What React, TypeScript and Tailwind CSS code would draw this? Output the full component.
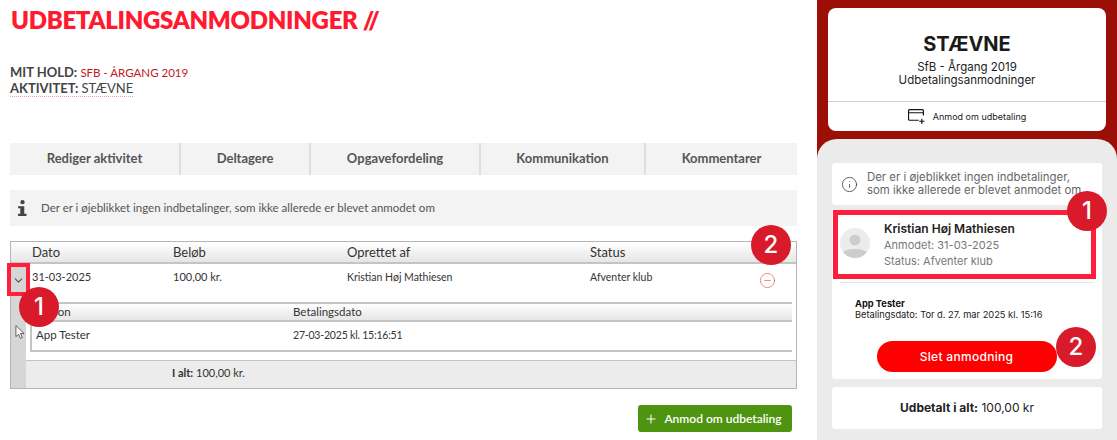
import React from "react";
import { Plus, Info, CircleMinus, ChevronDown } from "lucide-react";

const Badge = ({ n, cls }: { n: string; cls: string }) => (
  <div className={`absolute z-20 flex h-10 w-10 items-center justify-center rounded-full bg-[#d91a2a] text-[24px] font-medium leading-none text-white font-['Inter',sans-serif] ${cls}`}>
    {n}
  </div>
);

const Tab = ({ label, w }: { label: string; w: string }) => (
  <div className={`flex h-full items-center justify-center border-r-2 border-[#dedede] last:border-r-0 ${w}`}>{label}</div>
);

export default function App() {
  return (
    <div className="relative flex h-[440px] w-[1117px] overflow-hidden bg-white font-['Lato',sans-serif]">
      <main className="w-[817px] shrink-0 pl-[10px] pr-[20px] text-[#444]">
        <h1 className="ml-px pt-[4px] text-[24px] font-extrabold leading-[32px] tracking-[-0.3px] text-[#ff1a30]">UDBETALINGSANMODNINGER //</h1>
        <div className="mt-[29px] text-[13px] leading-[15px]">
          <div className="font-bold">MIT HOLD: <span className="text-[11.5px] font-normal text-[#c4161c]">SFB - ÅRGANG 2019</span></div>
          <div className="w-fit border-b border-dotted border-[#f0a0ae] font-bold leading-[16px]">AKTIVITET: <span className="font-normal">STÆVNE</span></div>
        </div>

        <nav className="mt-[46px] flex h-[32px] bg-[#f3f3f3] text-[13px] font-bold text-[#555]">
          <Tab label="Rediger aktivitet" w="w-[171px]" />
          <Tab label="Deltagere" w="w-[130px]" />
          <Tab label="Opgavefordeling" w="w-[170px]" />
          <Tab label="Kommunikation" w="w-[165px]" />
          <Tab label="Kommentarer" w="flex-1" />
        </nav>

        <div className="mt-[15px] flex h-[36px] items-center bg-[#f3f3f3] text-[11.5px] text-[#555]">
          <svg viewBox="0 0 10 18" className="ml-[8px] mr-[14px] h-[16px] w-[9px] fill-[#444]">
            <circle cx="5" cy="2.5" r="2.4" />
            <path d="M0 7h7v8.5h2.5V18H0v-2.5h2.5V9.4H0z" />
          </svg>
          Der er i øjeblikket ingen indbetalinger, som ikke allerede er blevet anmodet om
        </div>

        <section className="mt-[15px] h-[148px] border border-[#b5b5b5] text-[11.5px] text-[#333]">
          <div className="grid h-[22px] grid-cols-[141px_174px_243px_1fr] border-b-2 border-[#c4c4c4] bg-gradient-to-b from-white to-[#e6e6e6] pl-[21px] text-[13px] leading-[20px]">
            <span>Dato</span><span>Beløb</span><span>Oprettet af</span><span>Status</span>
          </div>
          <div className="flex h-[124px]">
            <div className="flex w-[15px] shrink-0 justify-center bg-[#d6d6d6] pt-[10px]">
              <ChevronDown size={13} strokeWidth={2} className="text-[#555]" />
            </div>
            <div className="flex min-w-0 flex-1 flex-col">
              <div className="flex h-[38px] items-start pt-[6px]">
                <div className="grid flex-1 grid-cols-[141px_174px_243px_1fr] pl-[6px] leading-[14px]">
                  <span className="text-[11px]">31-03-2025</span><span className="text-[11px]">100,00 kr.</span><span className="text-[10.5px]">Kristian Høj Mathiesen</span><span className="text-[10.5px]">Afventer klub</span>
                </div>
                <CircleMinus size={17} strokeWidth={1} className="mr-[20px] mt-[2px] text-[#e25b5b]" />
              </div>
              <div className="ml-[4px] mr-[4px] h-[50px] border-b-2 border-l-2 border-[#c4c4c4]">
                <div className="grid h-[20px] grid-cols-[257px_1fr] border-b-2 border-t-2 border-[#c4c4c4] bg-gradient-to-b from-white to-[#e6e6e6] pl-[4px] leading-[16px]">
                  <span>Person</span><span>Betalingsdato</span>
                </div>
                <div className="grid grid-cols-[257px_1fr] pl-[4px] pt-[6px] text-[11.5px] leading-[14px]">
                  <span>App Tester</span><span className="text-[10.5px] tracking-[-0.2px]">27-03-2025 kl. 15:16:51</span>
                </div>
              </div>
              <div className="mt-[8px] flex flex-1 items-center border-t border-[#c4c4c4] bg-[#ececec] pb-[3px] pl-[146px] text-[11px]">
                <span><b>I alt:</b> 100,00 kr.</span>
              </div>
            </div>
          </div>
        </section>

        <div className="mt-[16px] flex justify-end pr-[5px]">
          <button className="flex h-[27px] w-[154px] items-center justify-center gap-[6px] rounded-[3px] bg-[#4f9410] pr-[4px] text-[12px] font-semibold text-white">
            <Plus size={14} strokeWidth={1.8} />
            Anmod om udbetaling
          </button>
        </div>
      </main>

      <aside className="w-[300px] shrink-0 bg-[#9c0f06] font-['Inter',sans-serif] text-[#222]">
        <div className="mx-[11px] mt-[8px] h-[123px] rounded-[8px] bg-white">
          <div className="h-[93px] pt-[24px] text-center">
            <div className="text-[20px] font-bold leading-[24px] text-[#1a1a1a]">STÆVNE</div>
            <div className="mt-[5px] text-[11.5px] leading-[13px]">SfB - Årgang 2019</div>
            <div className="text-[11.5px] leading-[13px]">Udbetalingsanmodninger</div>
          </div>
          <div className="flex h-[30px] items-center justify-center gap-[8px] border-t border-[#cfcfcf] text-[9px]">
            <svg viewBox="0 0 16 14" className="h-[15px] w-[17px] fill-none stroke-[#111]" strokeWidth="1.1">
              <path d="M10 10.5H1.5a1 1 0 0 1-1-1V1.5a1 1 0 0 1 1-1h12a1 1 0 0 1 1 1V6M.5 3.5h14M13 9v5M10.5 11.5h5" />
            </svg>
            Anmod om udbetaling
          </div>
        </div>

        <div className="mt-[8px] h-[301px] rounded-t-[20px] bg-[#ebebeb] px-[15px] pt-[24px]">
          <div className="flex h-[42px] items-center gap-[9px] rounded-[3px] bg-white px-[9px] text-[11.4px] leading-[13px] text-[#666]">
            <Info size={17} strokeWidth={1} className="shrink-0 text-[#222]" />
            <span className="whitespace-nowrap">Der er i øjeblikket ingen indbetalinger,<br />som ikke allerede er blevet anmodet om</span>
          </div>
          <div className="mt-[5px] h-[169px] rounded-b-[3px] bg-white">
            <div className="relative z-10 ml-px flex h-[69px] w-[263px] items-center border-[5px] border-[#ff1f3d] bg-white pl-[2px]">
              <div className="mb-[4px] flex h-[30px] w-[30px] shrink-0 items-center justify-center rounded-full bg-[#ececec]">
                <svg viewBox="0 0 30 30" className="h-[30px] w-[30px] overflow-hidden rounded-full">
                  <circle cx="15" cy="12" r="5.5" fill="#cdcdcd" />
                  <ellipse cx="15" cy="26" rx="13" ry="5" fill="#cdcdcd" />
                </svg>
              </div>
              <div className="ml-[14px] text-[11px] leading-[16px] text-[#777]">
                <div className="text-[12px] font-semibold text-[#222]">Kristian Høj Mathiesen</div>
                <div>Anmodet: 31-03-2025</div>
                <div>Status: Afventer klub</div>
              </div>
            </div>
            <div className="mx-[8px] mt-[3px] border-t border-[#e3e5ea] pl-[15px] pt-[15px] text-[9.3px] leading-[11px]">
              <div className="font-bold text-[#111]">App Tester</div>
              <div>Betalingsdato: Tor d. 27. mar 2025 kl. 15:16</div>
            </div>
            <div className="mt-[21px] flex justify-center pr-[1px]">
              <button className="h-[31px] w-[180px] rounded-full bg-[#ff0000] text-[12px] font-medium tracking-[0.3px] text-white">Slet anmodning</button>
            </div>
          </div>
          <div className="mt-[8px] flex h-[42px] items-center justify-center rounded-[3px] bg-white text-[12px] text-[#222]">
            <span><b className="font-bold">Udbetalt i alt:</b> 100,00 kr</span>
          </div>
        </div>
      </aside>

      <div className="absolute left-[7px] top-[263px] z-10 h-[33px] w-[23px] border-[4px] border-[#ff1f3d]" />
      <svg viewBox="0 0 12 16" className="absolute left-[15px] top-[324px] z-10 h-[16px] w-[11px] fill-white stroke-[#555]" strokeWidth="1">
        <path d="M1 1v12l3-2.5 2 4.5 2-1-2-4.3h4z" />
      </svg>
      <Badge n="1" cls="left-[19px] top-[287px]" />
      <Badge n="2" cls="left-[751px] top-[225px]" />
      <Badge n="1" cls="left-[1067px] top-[191px]" />
      <Badge n="2" cls="left-[1056px] top-[327px]" />
    </div>
  );
}
